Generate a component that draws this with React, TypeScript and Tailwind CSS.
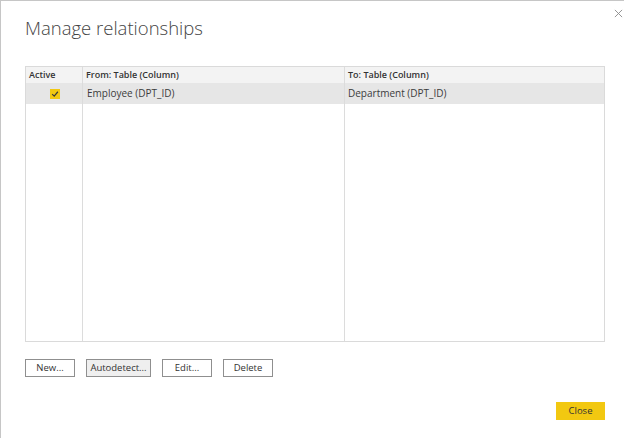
import React from "react";

const font = { fontFamily: '"Open Sans", "Noto Sans", sans-serif' };

type Column = {
  title: string;
  width: string;
  cell: React.ReactNode;
};

const CheckMark = () => (
  <span className="flex h-[10px] w-[10px] items-center justify-center bg-[#f2c811]">
    <svg viewBox="0 0 10 10" className="h-[8px] w-[8px]">
      <path d="M1.5 5.2 L4 7.6 L8.6 2.2" fill="none" stroke="#3a3a3a" strokeWidth="1.5" />
    </svg>
  </span>
);

const columns: Column[] = [
  {
    title: "Active",
    width: "w-[57px]",
    cell: (
      <div className="flex h-full items-center pl-[24px]">
        <CheckMark />
      </div>
    ),
  },
  {
    title: "From: Table (Column)",
    width: "w-[262px]",
    cell: <div className="flex h-full items-center pl-[4px]">Employee (DPT_ID)</div>,
  },
  {
    title: "To: Table (Column)",
    width: "flex-1",
    cell: <div className="flex h-full items-center pl-[3px]">Department (DPT_ID)</div>,
  },
];

const DialogButton = ({ label, width, hover }: { label: string; width: string; hover?: boolean }) => (
  <button
    className={`h-[18px] ${width} border border-[#8f8f8f] text-[9.5px] leading-none text-[#333] ${
      hover ? "bg-[#efefef]" : "bg-white"
    }`}
  >
    {label}
  </button>
);

export default function App() {
  return (
    <div
      style={font}
      className="relative flex h-[438px] w-[624px] flex-col border-t border-l border-[#c6c6c6] bg-white pl-[24px] pr-[19px] text-[#333]"
    >
      <button className="absolute top-[6px] right-[0px] flex h-[12px] w-[12px] items-center justify-center">
        <svg viewBox="0 0 10 10" className="h-[9px] w-[9px]">
          <path d="M1 1 L9 9 M9 1 L1 9" stroke="#8a8a8a" strokeWidth="1" fill="none" />
        </svg>
      </button>

      <h1 className="mt-[15px] h-[24px] text-[18.5px] leading-[24px] font-light text-[#444]">
        Manage relationships
      </h1>

      <div className="mt-[26px] flex h-[276px] border border-[#dadada] text-[10px]">
        {columns.map((col, i) => (
          <div
            key={col.title}
            className={`flex flex-col ${col.width} ${i < columns.length - 1 ? "border-r border-[#dcdcdc]" : ""}`}
          >
            <div className="flex h-[16px] items-center bg-[#f3f3f3] pl-[3px] text-[9px] font-semibold text-[#333]">
              {col.title}
            </div>
            <div className="h-[21px] bg-[#e6e6e6] text-[#3c3c3c]">{col.cell}</div>
            <div className="flex-1" />
          </div>
        ))}
      </div>

      <div className="mt-[17px] flex gap-[11px]">
        <DialogButton label="New..." width="w-[50px]" />
        <DialogButton label="Autodetect..." width="w-[65px]" hover />
        <DialogButton label="Edit..." width="w-[50px]" />
        <DialogButton label="Delete" width="w-[50px]" />
      </div>

      <div className="mt-[25px] flex justify-end">
        <button className="h-[18px] w-[49px] bg-[#f2c811] text-[9.5px] leading-none text-[#333]">
          Close
        </button>
      </div>
    </div>
  );
}
